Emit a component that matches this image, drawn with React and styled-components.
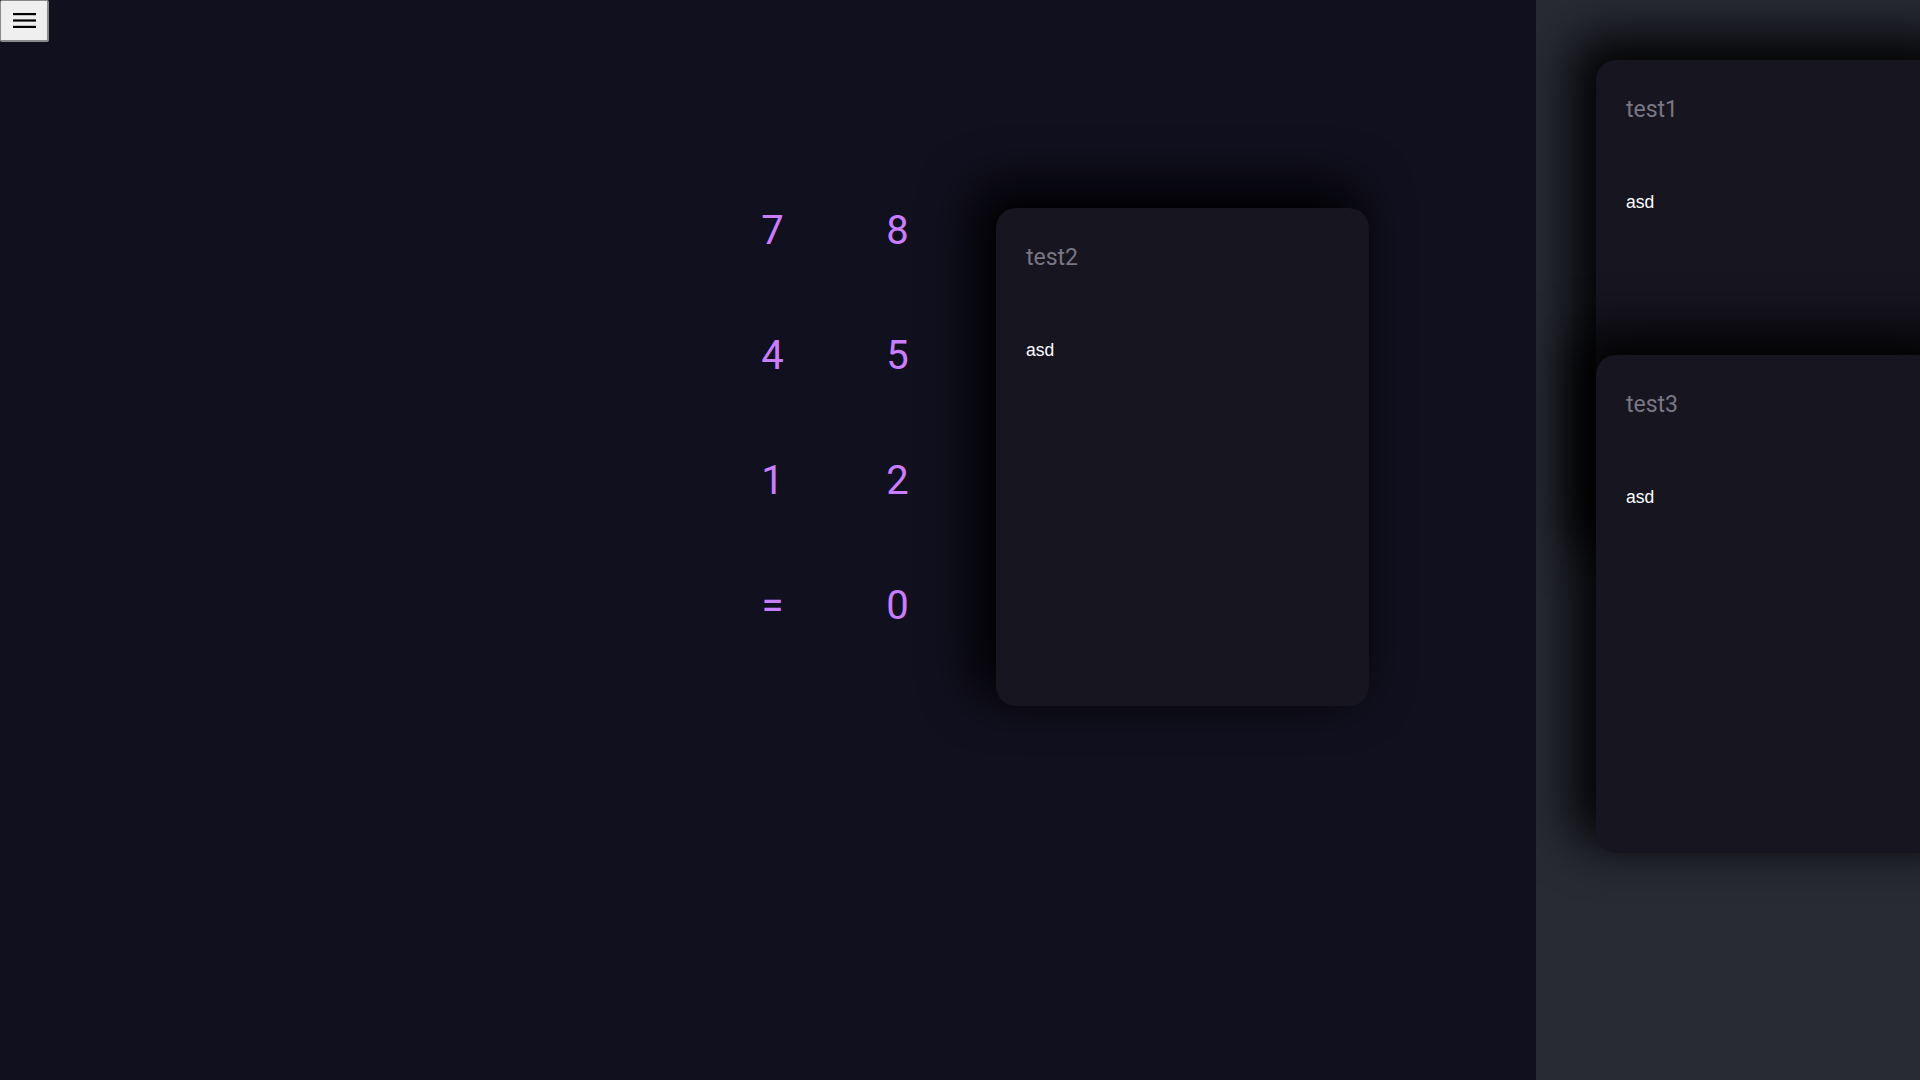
import React from "react";
import styled, { createGlobalStyle } from "styled-components";

const GlobalStyle = createGlobalStyle`
  html, body {
    margin: 0;
    padding: 0;
    height: 100%;
    background: #11101f;
  }
  #root {
    height: 100%;
  }
`;

const keys = ["7", "8", "4", "5", "1", "2", "=", "0"];

const sideCards = [
  { title: "test1", body: "asd" },
  { title: "test3", body: "asd", overlap: true },
];

const HamburgerIcon = () => (
  <svg width="23" height="15" viewBox="0 0 23 15" aria-hidden="true">
    <rect x="0" y="0" width="23" height="2.2" fill="#000" />
    <rect x="0" y="6.4" width="23" height="2.2" fill="#000" />
    <rect x="0" y="12.8" width="23" height="2.2" fill="#000" />
  </svg>
);

const Card = ({ title, body, overlap }) => (
  <CardBox $overlap={overlap}>
    <CardTitle>{title}</CardTitle>
    <CardBody>{body}</CardBody>
  </CardBox>
);

const App = () => {
  return (
    <>
      <GlobalStyle />
      <Page>
        <Main>
          <TopBar>
            <MenuButton aria-label="menu">
              <HamburgerIcon />
            </MenuButton>
          </TopBar>
          <Stage>
            <Keypad>
              {keys.map((k) => (
                <Key key={k}>{k}</Key>
              ))}
            </Keypad>
            <Card title="test2" body="asd" />
          </Stage>
        </Main>
        <Sidebar>
          {sideCards.map((c) => (
            <Card key={c.title} {...c} />
          ))}
        </Sidebar>
      </Page>
    </>
  );
};

export default App;

const Page = styled.div`
  display: flex;
  height: 100vh;
  overflow: hidden;
`;

const Main = styled.main`
  flex: 1;
  display: flex;
  flex-direction: column;
  background: #11101f;
`;

const TopBar = styled.div`
  height: 42px;
  display: flex;
  align-items: flex-start;
`;

const MenuButton = styled.button`
  width: 49px;
  height: 42px;
  padding: 0;
  display: flex;
  align-items: center;
  justify-content: center;
  background: #efefef;
  border: 1px solid #8a8a8a;
  border-right-width: 2px;
  border-bottom-width: 2px;
  border-radius: 2px;
  cursor: pointer;
`;

const Stage = styled.div`
  display: flex;
  justify-content: flex-end;
  align-items: flex-start;
  gap: 36px;
  padding: 126px 167px 0 0;
`;

const Keypad = styled.div`
  display: grid;
  grid-template-columns: repeat(2, 125px);
  grid-auto-rows: 125px;
`;

const Key = styled.div`
  display: flex;
  align-items: center;
  justify-content: center;
  font-family: Roboto, "Noto Sans", sans-serif;
  font-size: 40px;
  color: #c97eff;
`;

const CardBox = styled.section`
  box-sizing: border-box;
  flex-shrink: 0;
  width: 373px;
  min-width: 373px;
  height: 498px;
  margin-top: ${({ $overlap }) => ($overlap ? "-203px" : "40px")};
  padding: 36px 30px;
  background: #17151f;
  border-radius: 20px;
  box-shadow: -16px -16px 50px 8px rgba(0, 0, 0, 0.95);
  position: relative;
`;

const CardTitle = styled.h3`
  margin: 0;
  font-family: Roboto, "Noto Sans", sans-serif;
  font-weight: 400;
  font-size: 23px;
  line-height: 27px;
  color: #7a7684;
`;

const CardBody = styled.p`
  margin: 69px 0 0;
  font-family: "Liberation Sans", Arial, sans-serif;
  font-size: 17.5px;
  color: #ffffff;
`;

const Sidebar = styled.aside`
  width: 384px;
  flex-shrink: 0;
  box-sizing: border-box;
  padding: 20px 0 0 60px;
  background: #282b34;
  overflow: hidden;
`;
